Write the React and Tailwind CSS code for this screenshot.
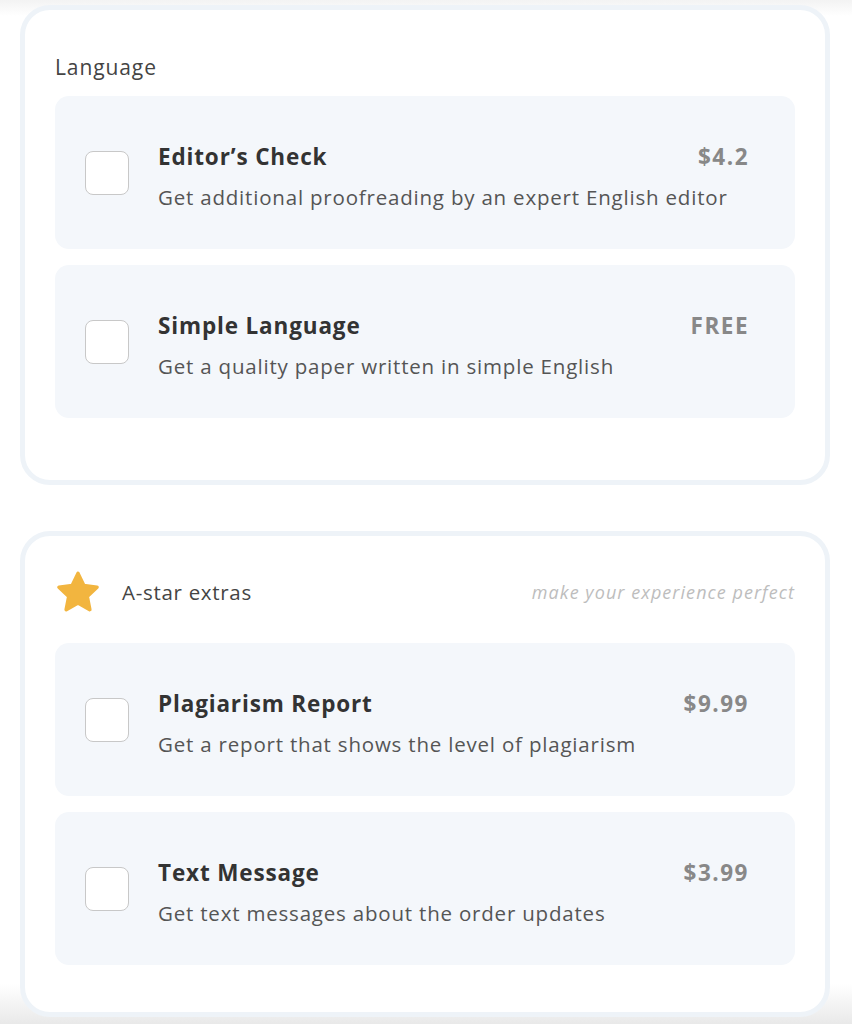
import React from "react";

const font = { fontFamily: '"Open Sans", "Noto Sans", sans-serif' };

function Check() {
  return <div className="w-[44px] h-[44px] shrink-0 rounded-[8px] border-[1.5px] border-[#c8c8c8] bg-white" />;
}

function Row({ title, desc, price }) {
  return (
    <div className="h-[153px] rounded-[14px] bg-[#f4f7fb] flex items-center pl-[30px] pr-[46px]">
      <Check />
      <div className="ml-[29px] flex-1 pt-[8px]">
        <div className="flex justify-between items-center -mt-[1px]">
          <div className="text-[22.5px] font-bold text-[#333] leading-[28px] tracking-[0.85px]">{title}</div>
          <div className="text-[22.5px] font-bold text-[#888] leading-[28px] tracking-[1.5px]">{price}</div>
        </div>
        <div className="mt-[13px] text-[20.5px] text-[#555] leading-[26px] tracking-[0.8px]">{desc}</div>
      </div>
    </div>
  );
}

export default function App() {
  return (
    <div className="w-[852px] h-[1024px] bg-white overflow-hidden relative" style={font}>
      <div className="absolute inset-x-0 top-0 h-[16px] bg-gradient-to-b from-[#f3f3f3] to-white" />
      <div className="absolute inset-x-0 bottom-0 h-[40px] bg-gradient-to-t from-[#e9e9e9] to-white" />
      <div className="relative pl-[20px] pr-[22px] pt-[5px] flex flex-col gap-[46px]">
        <div className="border-[5px] border-[#eef3f8] rounded-[30px] px-[30px] pb-[62px] bg-white">
          <div className="h-[86px] flex items-end pb-[13px] text-[21px] text-[#444] tracking-[0.9px]">Language</div>
          <div className="flex flex-col gap-[16px]">
            <Row title="Editor’s Check" desc="Get additional proofreading by an expert English editor" price="$4.2" />
            <Row title="Simple Language" desc="Get a quality paper written in simple English" price="FREE" />
          </div>
        </div>
        <div className="border-[5px] border-[#eef3f8] rounded-[30px] px-[30px] pb-[47px] bg-white">
          <div className="h-[107px] pt-[6px] flex items-center justify-between">
            <div className="flex items-center">
              <svg width="48" height="48" viewBox="0 0 24 24" className="-ml-[1px]">
                <path d="M12 2.2l2.9 6.1 6.6.8-4.9 4.6 1.3 6.6L12 17l-5.9 3.3 1.3-6.6L2.5 9.1l6.6-.8z" fill="#f2b53f" stroke="#f2b53f" strokeWidth="1.8" strokeLinejoin="round" />
              </svg>
              <span className="ml-[20px] text-[20.5px] text-[#444] tracking-[0.7px]">A-star extras</span>
            </div>
            <span className="text-[18px] italic text-[#bdbdbd] tracking-[1.05px]">make your experience perfect</span>
          </div>
          <div className="flex flex-col gap-[16px]">
            <Row title="Plagiarism Report" desc="Get a report that shows the level of plagiarism" price="$9.99" />
            <Row title="Text Message" desc="Get text messages about the order updates" price="$3.99" />
          </div>
        </div>
      </div>
    </div>
  );
}
